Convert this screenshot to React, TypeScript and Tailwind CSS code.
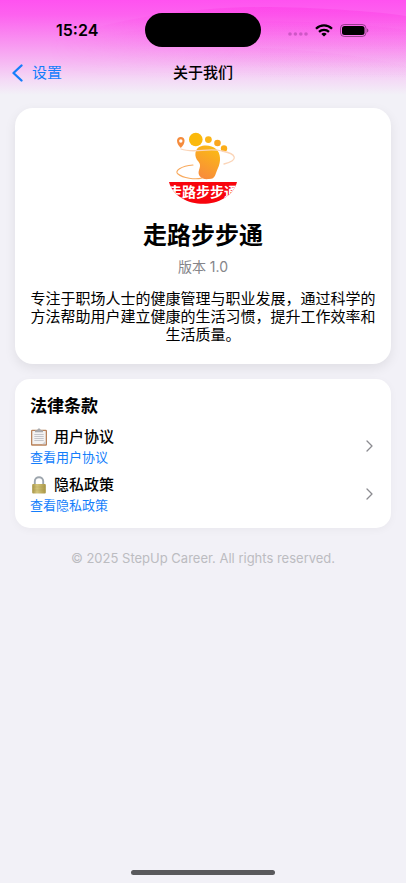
import React from "react";

function HeaderBackdrop() {
  return (
    <svg
      className="absolute inset-x-0 top-0 -z-10 h-[100px] w-full"
      viewBox="0 0 406 100"
      preserveAspectRatio="none"
      aria-hidden="true"
    >
      <defs>
        <linearGradient id="sky" x1="0" y1="0" x2="0" y2="1">
          <stop offset="0" stopColor="#ff52f0" />
          <stop offset="0.15" stopColor="#fd62ef" />
          <stop offset="0.4" stopColor="#f990f1" />
          <stop offset="0.62" stopColor="#f6b8f3" />
          <stop offset="0.8" stopColor="#f4daf6" />
          <stop offset="0.95" stopColor="#f2f1f7" />
        </linearGradient>
        <linearGradient id="wave" x1="0" y1="0" x2="0" y2="1">
          <stop offset="0" stopColor="#ff2ce2" stopOpacity="0.5" />
          <stop offset="0.9" stopColor="#ff5ce6" stopOpacity="0" />
        </linearGradient>
        <linearGradient id="fade" x1="0" x2="1">
          <stop offset="0.12" stopColor="#000" />
          <stop offset="0.6" stopColor="#fff" />
        </linearGradient>
        <mask id="side">
          <rect width="406" height="100" fill="url(#fade)" />
        </mask>
      </defs>
      <rect width="406" height="100" fill="url(#sky)" />
      <g mask="url(#side)">
        <path d="M0 60C110 14 200 7 270 7C330 8 380 12 406 16V75H0Z" fill="url(#wave)" opacity="0.7" />
        <path d="M0 60C130 24 220 20 270 21C330 22 380 26 406 30V85H0Z" fill="url(#wave)" opacity="0.2" />
        <path d="M260 48C320 50 370 57 406 66V85H260Z" fill="url(#wave)" opacity="0.1" />
      </g>
    </svg>
  );
}

function StatusBar() {
  return (
    <div className="flex h-[60px] items-center pl-14 pr-[37px]">
      <span className="w-[89px] text-base leading-5 font-semibold">15:24</span>
      <div className="h-[34px] w-[116px] shrink-0 rounded-full bg-black" />
      <div className="flex flex-1 items-center justify-end gap-[7px]">
        <svg className="mt-2 h-1 w-5" viewBox="0 0 20 4" fill="#8b2f8b" fillOpacity="0.4" aria-hidden="true">
          <circle cx="2" cy="2" r="1.8" />
          <circle cx="7.4" cy="2" r="1.8" />
          <circle cx="12.8" cy="2" r="1.8" />
          <circle cx="18" cy="2" r="1.8" />
        </svg>
        <svg className="h-[13px] w-[18px]" viewBox="0 0 18 13" fill="none" stroke="#000" strokeWidth="2.3" aria-label="Wi-Fi">
          <path d="M1 4.7C5.5 .3 12.5 .3 17 4.7" />
          <path d="M4 7.8C6.8 5.2 11.2 5.2 14 7.8" />
          <path d="M9 12.6L6.3 9.9C7.8 8.5 10.2 8.5 11.7 9.9Z" fill="#000" stroke="none" />
        </svg>
        <svg className="h-[13px] w-[29px]" viewBox="0 0 29 13" aria-label="电池">
          <rect x="0.5" y="0.5" width="25.5" height="12" rx="3.8" fill="none" stroke="#000" strokeOpacity="0.4" />
          <rect x="2" y="2" width="22.5" height="9" rx="2.5" />
          <path d="M27.2 4.5C28.7 5 28.7 8 27.2 8.5Z" fillOpacity="0.5" />
        </svg>
      </div>
    </div>
  );
}

function NavBar() {
  return (
    <header className="grid h-12 grid-cols-[1fr_auto_1fr] items-start px-3 pt-[2px] text-[15px] leading-[22px]">
      <button type="button" className="flex items-center gap-[9px] text-[#147efb]">
        <svg className="h-[18px] w-[11px]" viewBox="0 0 11 18" fill="none" stroke="currentColor" strokeWidth="2.3" strokeLinecap="round" strokeLinejoin="round" aria-hidden="true">
          <path d="M9.5 1.5L1.5 9l8 7.5" />
        </svg>
        设置
      </button>
      <h1 className="font-medium">关于我们</h1>
    </header>
  );
}

function AppLogo() {
  return (
    <svg className="h-[74px] w-[74px]" viewBox="0 0 74 74" role="img" aria-label="走路步步通">
      <defs>
        <linearGradient id="foot" x1="0.7" y1="0" x2="0.3" y2="1">
          <stop offset="0" stopColor="#fbbb13" />
          <stop offset="1" stopColor="#f88a3d" />
        </linearGradient>
        <clipPath id="disc">
          <path d="M3 51H71C63 80 11 80 3 51Z" />
        </clipPath>
      </defs>
      <circle cx="29.8" cy="8.5" r="6.8" fill="#fbb90b" />
      <circle cx="42.4" cy="8.6" r="3.4" fill="#fbb51a" />
      <circle cx="51.5" cy="12" r="3.3" fill="#faa61f" />
      <circle cx="58" cy="17.5" r="3.2" fill="#fbad18" />
      <path
        d="M30 20C32 13 45 13 50 18C55 22 55 31 52 37C49 43 50 48 43 48C36 49 31 45 33 39C35 34 34 32 31 29C29 26 29 22 30 20Z"
        fill="url(#foot)"
      />
      <path d="M14.8 17C9.5 12 10 6 14.8 6C19.6 6 20 12 14.8 17Z" fill="#f58b3c" />
      <circle cx="14.8" cy="10" r="1.7" fill="#fff" />
      <path d="M15 18C28 23 43 16 56 20C71 23 73 29 58 33" fill="none" stroke="#fbd5b8" strokeWidth="1.3" strokeLinecap="round" />
      <path d="M27 34C15 35 8 40 12 43C17 47 29 49 36 47" fill="none" stroke="#f8a95c" strokeWidth="1.1" strokeLinecap="round" />
      <g clipPath="url(#disc)">
        <rect y="51" width="74" height="23" fill="#f8040d" />
        <text x="37" y="66" textAnchor="middle" fill="#fff" className="text-[14px] font-bold">
          走路步步通
        </text>
      </g>
    </svg>
  );
}

function ClipboardIcon() {
  return (
    <svg className="h-[18px] w-[18px]" viewBox="0 0 18 18" aria-hidden="true">
      <rect x="1" y="1.7" width="16" height="16" rx="1.2" fill="#b9825a" />
      <rect x="2.3" y="3" width="13.4" height="13.2" fill="#f3f2f2" />
      <path d="M5 3.2V2.2H7.3C7.3-.2 10.7-.2 10.7 2.2H13V4.2H5Z" fill="#a9aaae" />
      <path d="M4.3 6.5H13.7M4.3 8.5H13.7M4.3 10.5H13.7M4.3 12.5H13.7" stroke="#c5c5ca" strokeWidth="1" />
      <path d="M12 16.2L15.7 12.8V16.2Z" fill="#cfcfd3" />
    </svg>
  );
}

function LockIcon() {
  return (
    <svg className="h-[18px] w-[18px]" viewBox="0 0 18 18" aria-hidden="true">
      <defs>
        <linearGradient id="brass" x1="0" x2="1">
          <stop offset="0" stopColor="#a79445" />
          <stop offset="0.35" stopColor="#d3c57c" />
          <stop offset="1" stopColor="#a99645" />
        </linearGradient>
      </defs>
      <path d="M4.8 9V5.3C4.8-.2 13.2-.2 13.2 5.3V9" fill="none" stroke="#9da5ad" strokeWidth="1.9" />
      <rect x="2.2" y="8" width="13.6" height="9.5" rx="1" fill="url(#brass)" />
      <path d="M2.5 11H15.5M2.5 14H15.5" stroke="#998940" strokeWidth="0.5" opacity="0.4" />
    </svg>
  );
}

function LegalRow({ icon, title, action }: { icon: React.ReactNode; title: string; action: string }) {
  return (
    <a href="#" className="flex items-center justify-between pr-[3px]">
      <span className="flex flex-col">
        <span className="flex items-center gap-[6px] text-[15px] leading-[22px] font-medium">
          {icon}
          {title}
        </span>
        <span className="text-[13px] leading-[18px] text-[#147efb]">{action}</span>
      </span>
      <svg className="h-3 w-[7px]" viewBox="0 0 7 12" fill="none" stroke="#8b8b90" strokeWidth="1.3" strokeLinecap="round" strokeLinejoin="round" aria-hidden="true">
        <path d="M1 1l5 5-5 5" />
      </svg>
    </a>
  );
}

export default function App() {
  return (
    <div className="relative isolate flex min-h-screen flex-col bg-[#f2f1f7] font-['Inter','Noto_Sans_CJK_SC',sans-serif] text-black">
      <HeaderBackdrop />
      <StatusBar />
      <NavBar />
      <main className="flex flex-col gap-[15px] px-[15px]">
        <section className="flex flex-col items-center rounded-[18px] bg-white px-[15px] pt-[23px] pb-5 text-center shadow-[0_4px_12px_rgba(0,0,0,0.08)]">
          <AppLogo />
          <h2 className="mt-[13px] text-2xl leading-9 font-bold">走路步步通</h2>
          <p className="mt-[3px] text-[14px] leading-5 text-[#85858a]">版本 1.0</p>
          <p className="mt-[13px] text-[15px] leading-[18px]">
            专注于职场人士的健康管理与职业发展&#xff0c;通过科学的方法帮助用户建立健康的生活习惯&#xff0c;提升工作效率和生活质量。
          </p>
        </section>
        <section className="flex flex-col rounded-[15px] bg-white px-[15px] pt-[15px] pb-[14px] shadow-[0_2px_8px_rgba(0,0,0,0.04)]">
          <h2 className="mb-2 text-[17px] leading-6 font-bold">法律条款</h2>
          <div className="flex flex-col gap-2">
            <LegalRow icon={<ClipboardIcon />} title="用户协议" action="查看用户协议" />
            <LegalRow icon={<LockIcon />} title="隐私政策" action="查看隐私政策" />
          </div>
        </section>
        <footer className="mt-[5px] text-center text-[13px] leading-5 text-[#bcbcc1]">
          © 2025 StepUp Career. All rights reserved.
        </footer>
      </main>
      <div className="mx-auto mt-auto mb-2 h-[5px] w-36 rounded-full bg-[#59595c]" />
    </div>
  );
}
